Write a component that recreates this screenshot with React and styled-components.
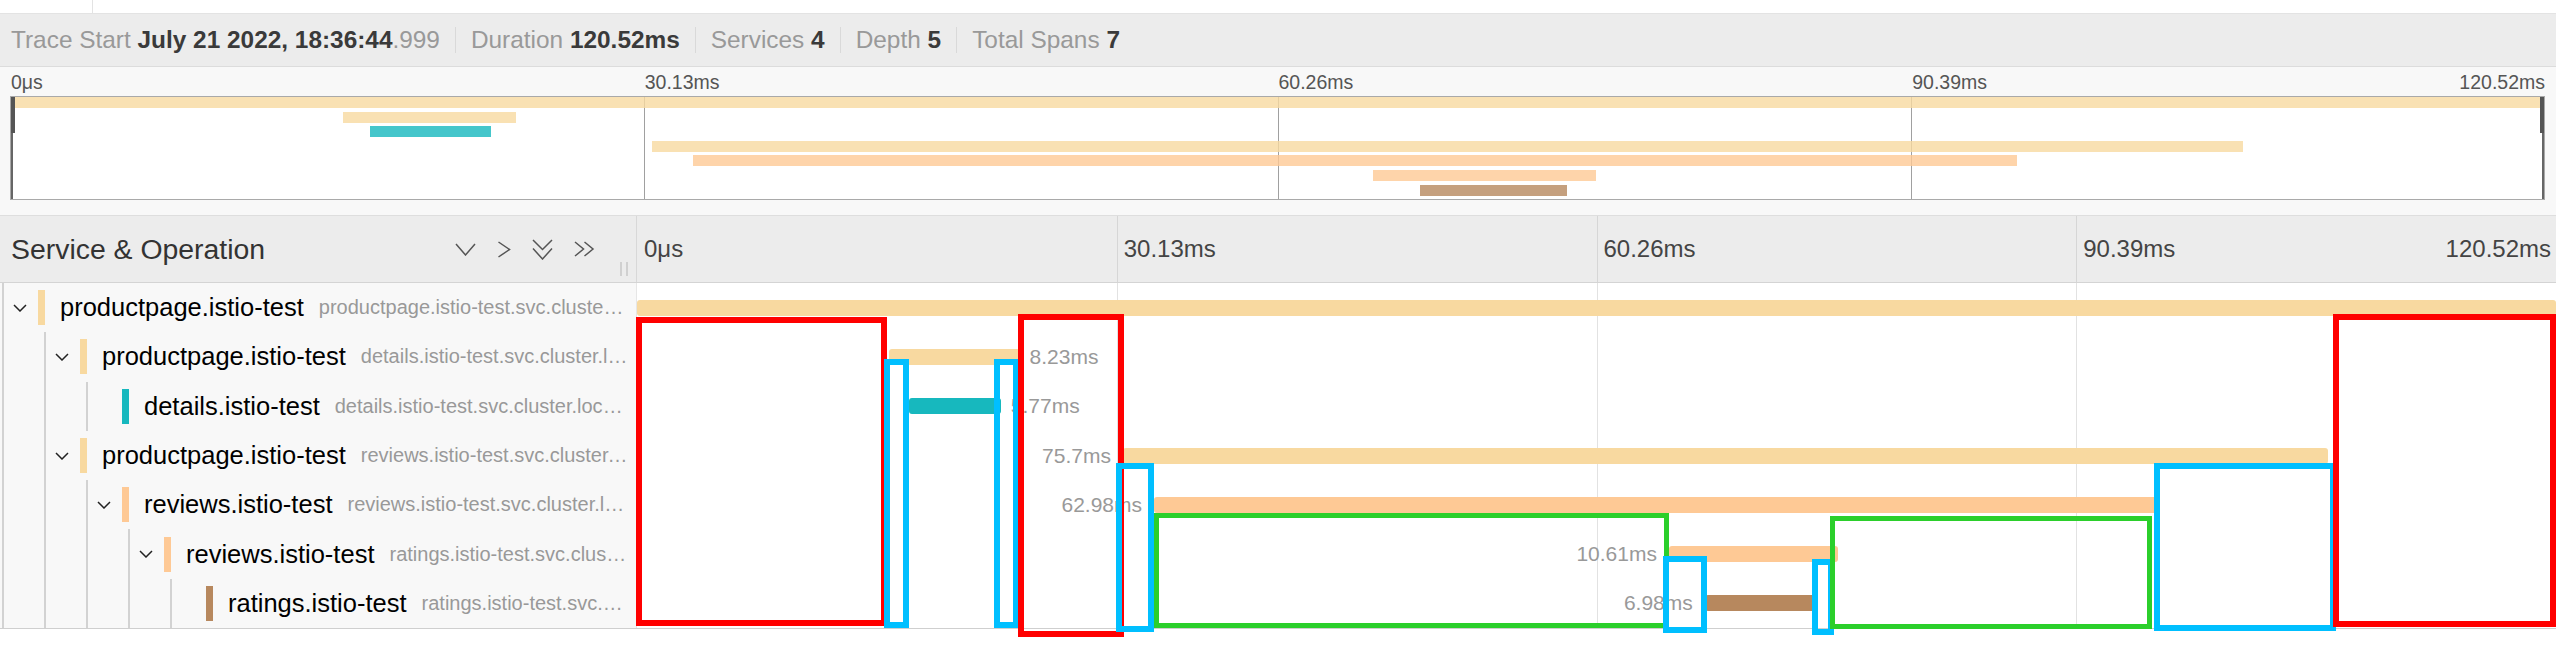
import React from 'react';
import styled, { createGlobalStyle } from 'styled-components';

const TOTAL = 120.52;
const PRODUCT = '#f8d9a0';
const REVIEWS = '#fec995';
const DETAILS = '#17b8be';
const RATINGS = '#b7885e';

const spans = [
  { service: 'productpage.istio-test', op: 'productpage.istio-test.svc.cluster.local:9080/productpage', depth: 0, start: 0, dur: 120.52, color: PRODUCT, toggle: true },
  { service: 'productpage.istio-test', op: 'details.istio-test.svc.cluster.local:9080/*', depth: 1, start: 15.8, dur: 8.23, color: PRODUCT, toggle: true, label: '8.23ms', side: 'right' },
  { service: 'details.istio-test', op: 'details.istio-test.svc.cluster.local:9080/*', depth: 2, start: 17.08, dur: 5.77, color: DETAILS, label: '5.77ms', side: 'right' },
  { service: 'productpage.istio-test', op: 'reviews.istio-test.svc.cluster.local:9080/*', depth: 1, start: 30.52, dur: 75.7, color: PRODUCT, toggle: true, label: '75.7ms', side: 'left' },
  { service: 'reviews.istio-test', op: 'reviews.istio-test.svc.cluster.local:9080/*', depth: 2, start: 32.47, dur: 62.98, color: REVIEWS, toggle: true, label: '62.98ms', side: 'left' },
  { service: 'reviews.istio-test', op: 'ratings.istio-test.svc.cluster.local:9080/*', depth: 3, start: 64.81, dur: 10.61, color: REVIEWS, toggle: true, label: '10.61ms', side: 'left' },
  { service: 'ratings.istio-test', op: 'ratings.istio-test.svc.cluster.local:9080/*', depth: 4, start: 67.06, dur: 6.98, color: RATINGS, label: '6.98ms', side: 'left' },
];

const ticks = ['0μs', '30.13ms', '60.26ms', '90.39ms', '120.52ms'];

// hand drawn annotation boxes over the screenshot
const marks = [
  { color: '#ff0000', x: 636, y: 317, w: 251, h: 309, b: 6 },
  { color: '#00bfff', x: 884, y: 359, w: 25, h: 269, b: 6 },
  { color: '#00bfff', x: 994, y: 359, w: 25, h: 269, b: 6 },
  { color: '#ff0000', x: 1018, y: 314, w: 106, h: 323, b: 6 },
  { color: '#00bfff', x: 1116, y: 463, w: 38, h: 169, b: 6 },
  { color: '#2bcf2b', x: 1154, y: 513, w: 515, h: 115, b: 5 },
  { color: '#00bfff', x: 1663, y: 556, w: 44, h: 77, b: 6 },
  { color: '#00bfff', x: 1812, y: 559, w: 22, h: 76, b: 6 },
  { color: '#2bcf2b', x: 1830, y: 516, w: 322, h: 113, b: 5 },
  { color: '#00bfff', x: 2154, y: 463, w: 182, h: 168, b: 6 },
  { color: '#ff0000', x: 2333, y: 314, w: 223, h: 313, b: 6 },
];

const pct = (v) => `${(v / TOTAL) * 100}%`;

const GlobalStyle = createGlobalStyle`
  html, body { margin: 0; padding: 0; background: #fff; }
  body { font-family: "Liberation Sans", Arial, sans-serif; color: #333; }
`;

function Chevron({ dir }) {
  if (dir === 'right') {
    return (
      <svg width="14" height="17" viewBox="0 0 14 17">
        <polyline points="1.5,1 12.5,8.5 1.5,16" fill="none" stroke="#555" strokeWidth="1.5" />
      </svg>
    );
  }
  if (dir === 'downs') {
    return (
      <svg width="21" height="21" viewBox="0 0 21 21">
        <polyline points="1,1 10.5,10.5 20,1" fill="none" stroke="#555" strokeWidth="1.5" />
        <polyline points="1,9.5 10.5,20 20,9.5" fill="none" stroke="#555" strokeWidth="1.5" />
      </svg>
    );
  }
  if (dir === 'rights') {
    return (
      <svg width="21" height="16" viewBox="0 0 21 16">
        <polyline points="1,1 9.5,8 1,15" fill="none" stroke="#555" strokeWidth="1.5" />
        <polyline points="10.5,1 19,8 10.5,15" fill="none" stroke="#555" strokeWidth="1.5" />
      </svg>
    );
  }
  return (
    <svg width="21" height="13" viewBox="0 0 21 13">
      <polyline points="1,1 10.5,12 20,1" fill="none" stroke="#555" strokeWidth="1.5" />
    </svg>
  );
}

function App() {
  return (
    <Page>
      <GlobalStyle />
      <TopStrip>
        <TabStub />
      </TopStrip>

      <TraceHeader>
        <Item>
          <Label>Trace Start</Label> <Value>July 21 2022, 18:36:44</Value><Label>.999</Label>
        </Item>
        <Sep />
        <Item>
          <Label>Duration</Label> <Value>120.52ms</Value>
        </Item>
        <Sep />
        <Item>
          <Label>Services</Label> <Value>4</Value>
        </Item>
        <Sep />
        <Item>
          <Label>Depth</Label> <Value>5</Value>
        </Item>
        <Sep />
        <Item>
          <Label>Total Spans</Label> <Value>7</Value>
        </Item>
      </TraceHeader>

      <Minimap>
        <MiniTicks>
          {ticks.map((t, i) => (
            <MiniTickLabel key={t} $last={i === ticks.length - 1} style={i === ticks.length - 1 ? undefined : { left: `${i * 25}%` }}>
              {t}
            </MiniTickLabel>
          ))}
        </MiniTicks>
        <MiniCanvas>
          {[1, 2, 3].map((i) => (
            <MiniGrid key={i} style={{ left: `${i * 25}%` }} />
          ))}
          {spans.map((s, i) => (
            <MiniRow key={i}>
              <MiniBar $color={s.color} style={{ left: pct(s.start), width: pct(s.dur) }} />
            </MiniRow>
          ))}
          <Handle />
          <Handle $right />
        </MiniCanvas>
      </Minimap>

      <Table>
        <HeaderRow>
          <NameHeader>
            <HeaderTitle>Service &amp; Operation</HeaderTitle>
            <Tools>
              <Chevron dir="down" />
              <Chevron dir="right" />
              <Chevron dir="downs" />
              <Chevron dir="rights" />
            </Tools>
            <Grip />
          </NameHeader>
          <TimeHeader>
            {[1, 2, 3].map((i) => (
              <TickLine key={i} style={{ left: `${i * 25}%` }} />
            ))}
            {ticks.map((t, i) => (
              <TickLabel key={t} $last={i === ticks.length - 1} style={i === ticks.length - 1 ? undefined : { left: `${i * 25}%` }}>
                {t}
              </TickLabel>
            ))}
          </TimeHeader>
        </HeaderRow>

        {spans.map((s, i) => (
          <Row key={i}>
            <NameCell>
              {Array.from({ length: s.depth }).map((_, k) => (
                <Indent key={k} />
              ))}
              <ToggleSlot>
                {s.toggle && (
                  <svg width="14" height="8" viewBox="0 0 14 8">
                    <polyline points="1,1 7,7 13,1" fill="none" stroke="#222" strokeWidth="1.5" />
                  </svg>
                )}
              </ToggleSlot>
              <ColorBar $color={s.color} />
              <ServiceName>{s.service}</ServiceName>
              <OpName>{s.op}</OpName>
            </NameCell>
            <TimeCell>
              {[1, 2, 3].map((k) => (
                <TickLine key={k} $light style={{ left: `${k * 25}%` }} />
              ))}
              <SpanBar $color={s.color} style={{ left: pct(s.start), width: pct(s.dur) }}>
                {s.label && <SpanLabel $side={s.side}>{s.label}</SpanLabel>}
              </SpanBar>
            </TimeCell>
          </Row>
        ))}
      </Table>

      {marks.map((m, i) => (
        <Mark key={i} $color={m.color} $x={m.x} $y={m.y} $w={m.w} $h={m.h} $b={m.b} />
      ))}
    </Page>
  );
}

const Page = styled.div`
  position: relative;
  width: 2556px;
  height: 662px;
  overflow: hidden;
  background: #fff;
`;

const TopStrip = styled.div`
  display: flex;
  height: 13px;
  border-bottom: 1px solid #e3e3e3;
`;

const TabStub = styled.div`
  width: 92px;
  border-right: 1px solid #e3e3e3;
`;

const TraceHeader = styled.div`
  display: flex;
  align-items: center;
  height: 52px;
  padding-left: 11px;
  background: #ececec;
  border-bottom: 1px solid #dcdcdc;
  font-size: 24.4px;
  white-space: nowrap;
`;

const Item = styled.span``;

const Label = styled.span`
  color: #999;
`;

const Value = styled.strong`
  color: #3a3a3a;
  font-weight: 700;
`;

const Sep = styled.span`
  width: 1px;
  height: 26px;
  background: #d9d9d9;
  margin: 0 15px;
`;

const Minimap = styled.div`
  background: #f8f8f8;
  border-bottom: 1px solid #dedede;
  padding: 0 11px 15px 10px;
`;

const MiniTicks = styled.div`
  position: relative;
  height: 29px;
  font-size: 19.5px;
  color: #555;
`;

const MiniTickLabel = styled.span`
  position: absolute;
  top: 4px;
  white-space: nowrap;
  ${(p) => (p.$last ? 'right: 0;' : 'margin-left: 1px;')}
`;

const MiniCanvas = styled.div`
  position: relative;
  height: 102px;
  border: 1px solid #a9a9a9;
  background: #fff;
`;

const MiniGrid = styled.div`
  position: absolute;
  top: 0;
  bottom: 0;
  width: 1px;
  background: #a0a0a0;
`;

const MiniRow = styled.div`
  position: relative;
  height: 14.6px;
`;

const MiniBar = styled.div`
  position: absolute;
  top: 0;
  height: 11px;
  background: ${(p) => p.$color};
  opacity: 0.8;
`;

const Handle = styled.div`
  position: absolute;
  top: 0;
  bottom: 0;
  ${(p) => (p.$right ? 'right: 0;' : 'left: 0;')}
  width: 2px;
  background: #666;
  &::before {
    content: '';
    position: absolute;
    top: 0;
    ${(p) => (p.$right ? 'right: 0;' : 'left: 0;')}
    width: 4px;
    height: 36px;
    background: #555;
  }
`;

const Table = styled.div`
  border-bottom: 1px solid #cfcfcf;
`;

const HeaderRow = styled.div`
  display: flex;
  height: 66px;
  background: #ececec;
  border-bottom: 1px solid #d4d4d4;
`;

const NameHeader = styled.div`
  display: flex;
  align-items: center;
  width: 637px;
  flex: none;
  box-sizing: border-box;
  padding-left: 11px;
  border-right: 1px solid #d8d8d8;
  font-size: 28.4px;
  color: #333;
  white-space: nowrap;
`;

const HeaderTitle = styled.span`
  flex: 1;
`;

const Tools = styled.div`
  display: flex;
  align-items: center;
  gap: 21px;
  margin-right: 25px;
`;

const Grip = styled.div`
  align-self: flex-end;
  width: 8px;
  height: 14px;
  margin: 0 8px 6px 0;
  border-left: 2px solid #d0d0d0;
  border-right: 2px solid #d0d0d0;
  box-sizing: border-box;
`;

const TimeHeader = styled.div`
  position: relative;
  flex: 1;
  font-size: 24px;
  color: #444;
`;

const TickLine = styled.div`
  position: absolute;
  top: 0;
  bottom: 0;
  width: 1px;
  background: ${(p) => (p.$light ? '#e2e2e2' : '#d6d6d6')};
`;

const TickLabel = styled.span`
  position: absolute;
  top: 50%;
  transform: translateY(-50%);
  white-space: nowrap;
  ${(p) => (p.$last ? 'right: 5px;' : 'margin-left: 7px;')}
`;

const Row = styled.div`
  display: flex;
  height: 49.3px;
`;

const NameCell = styled.div`
  display: flex;
  align-items: center;
  width: 637px;
  flex: none;
  box-sizing: border-box;
  padding: 0 8px 0 2px;
  background: #f8f8f8;
  border-right: 1px solid #e6e6e6;
`;

const Indent = styled.span`
  align-self: stretch;
  flex: none;
  width: 42px;
  box-sizing: border-box;
  border-left: 2px solid #d2d2d2;
`;

const ToggleSlot = styled(Indent)`
  display: flex;
  align-items: center;
  width: 36px;
  padding-left: 9px;
`;

const ColorBar = styled.span`
  flex: none;
  width: 7px;
  height: 35px;
  background: ${(p) => p.$color};
`;

const ServiceName = styled.span`
  flex: none;
  margin-left: 15px;
  font-size: 25.5px;
  color: #000;
  white-space: nowrap;
`;

const OpName = styled.span`
  min-width: 0;
  margin-left: 15px;
  font-size: 20px;
  color: #999;
  white-space: nowrap;
  overflow: hidden;
  text-overflow: ellipsis;
`;

const TimeCell = styled.div`
  position: relative;
  flex: 1;
  background: #fff;
`;

const SpanBar = styled.div`
  position: absolute;
  top: 50%;
  height: 16px;
  margin-top: -8px;
  border-radius: 3px;
  background: ${(p) => p.$color};
`;

const SpanLabel = styled.span`
  position: absolute;
  top: 50%;
  transform: translateY(-50%);
  font-size: 21px;
  color: #999;
  white-space: nowrap;
  ${(p) => (p.$side === 'left' ? 'right: calc(100% + 12px);' : 'left: calc(100% + 10px);')}
`;

const Mark = styled.div`
  position: absolute;
  left: ${(p) => p.$x}px;
  top: ${(p) => p.$y}px;
  width: ${(p) => p.$w}px;
  height: ${(p) => p.$h}px;
  box-sizing: border-box;
  border: ${(p) => p.$b}px solid ${(p) => p.$color};
  pointer-events: none;
`;

export default App;
